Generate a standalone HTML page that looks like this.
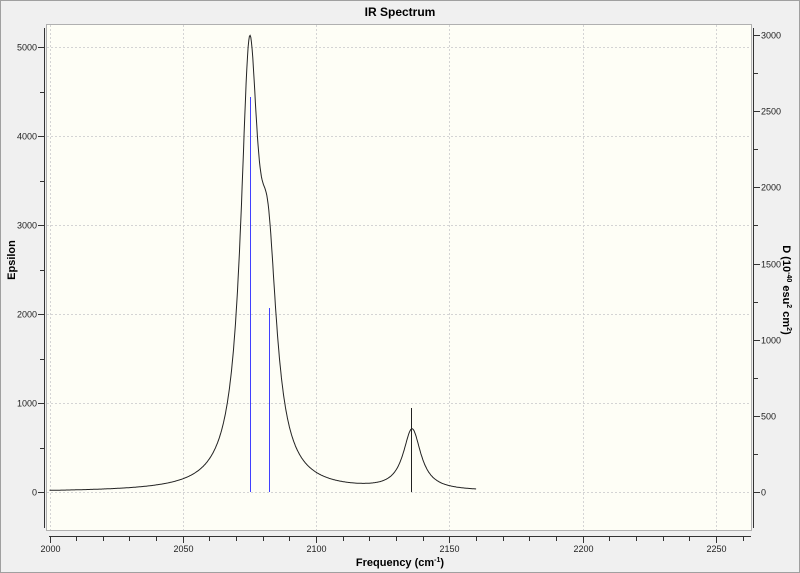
<!DOCTYPE html>
<html><head><meta charset="utf-8"><style>
body{margin:0;background:#fff;}
#w{position:relative;width:800px;height:573px;background:#f0f0f0;box-sizing:border-box;border:1px solid #a0a0a0;font-family:"Liberation Sans",sans-serif;}
</style></head><body><div id="w">
<svg width="800" height="573" style="position:absolute;left:-1px;top:-1px" font-family="Liberation Sans, sans-serif">
<text x="400" y="16" text-anchor="middle" font-size="12" font-weight="bold" fill="#000">IR Spectrum</text>
<rect x="46.5" y="24.5" width="705" height="506" fill="#fefef6" stroke="#b0b0b0"/>
<g id="grid" stroke="#d4d4d4" stroke-dasharray="2,2" fill="none"></g>
<g stroke="#333" fill="none">
<line x1="44.5" y1="28" x2="44.5" y2="528"/>
<line x1="49" y1="536.5" x2="751" y2="536.5"/>
<line x1="753.5" y1="28" x2="753.5" y2="528"/>
</g>
<g id="ticks" stroke="#333"></g>
<g id="labels" font-size="9" fill="#222"></g>
<path id="curve" fill="none" stroke="#222" stroke-width="1"/>
<line x1="250.5" y1="97" x2="250.5" y2="492" stroke="#4040ff"/>
<line x1="269.5" y1="308" x2="269.5" y2="492" stroke="#4040ff"/>
<line x1="411.5" y1="408" x2="411.5" y2="492" stroke="#222"/>
<text x="400" y="566" text-anchor="middle" font-size="11" font-weight="bold">Frequency (cm<tspan dy="-4" font-size="7">-1</tspan><tspan dy="4">)</tspan></text>
<text transform="translate(15,260) rotate(-90)" text-anchor="middle" font-size="11" font-weight="bold">Epsilon</text>
<text transform="translate(783,290) rotate(90)" text-anchor="middle" font-size="11" font-weight="bold">D (10<tspan dy="-4" font-size="7">-40</tspan><tspan dy="4"> esu</tspan><tspan dy="-4" font-size="7">2</tspan><tspan dy="4"> cm</tspan><tspan dy="-4" font-size="7">2</tspan><tspan dy="4">)</tspan></text>
</svg>
</div>
<script>
var NS="http://www.w3.org/2000/svg";
function el(p,t,a,txt){var e=document.createElementNS(NS,t);for(var k in a)e.setAttribute(k,a[k]);if(txt!=null)e.textContent=txt;document.getElementById(p).appendChild(e);}
function X(v){return 49.5+(v-2000)*133.3/50;}
function Y(e){return 492-e*0.089;}
for(var v=2000;v<=2250;v+=50){var x=Math.round(X(v))+0.5;el("grid","line",{x1:x,y1:25,x2:x,y2:530});el("labels","text",{x:x,y:552,"text-anchor":"middle"},v);}
for(var v=2000;v<=2260;v+=10){var x=Math.round(X(v))+0.5;el("ticks","line",{x1:x,y1:537,x2:x,y2:(v%50==0?543:541)});}
for(var e=0;e<=5000;e+=1000){var y=Math.round(Y(e))+0.5;el("grid","line",{x1:47,y1:y,x2:751,y2:y});el("labels","text",{x:37,y:y+3,"text-anchor":"end"},e);}
for(var e=-500;e<=5500;e+=500){var y=Math.round(Y(e))+0.5;if(y<28||y>528)continue;el("ticks","line",{x1:(e%1000==0?38:40),y1:y,x2:44,y2:y});}
for(var d=0;d<=3000;d+=500){var y=Math.round(492-d*457/3000)+0.5;el("ticks","line",{x1:754,y1:y,x2:760,y2:y});el("labels","text",{x:761,y:y+3},d);}
for(var d=-250;d<=3000;d+=250){if(d%500==0)continue;var y=Math.round(492-d*457/3000)+0.5;if(y>528)continue;el("ticks","line",{x1:754,y1:y,x2:758,y2:y});}
var pk=[[2075,4600],[2082,2100],[2136,680]],G=4,s="";
for(var v=2000;v<=2160;v+=0.25){var e=0;pk.forEach(function(p){e+=p[1]*G*G/((v-p[0])*(v-p[0])+G*G);});s+=(s?"L":"M")+X(v).toFixed(1)+","+Y(e).toFixed(1);}
document.getElementById("curve").setAttribute("d",s);
</script>
</body></html>
